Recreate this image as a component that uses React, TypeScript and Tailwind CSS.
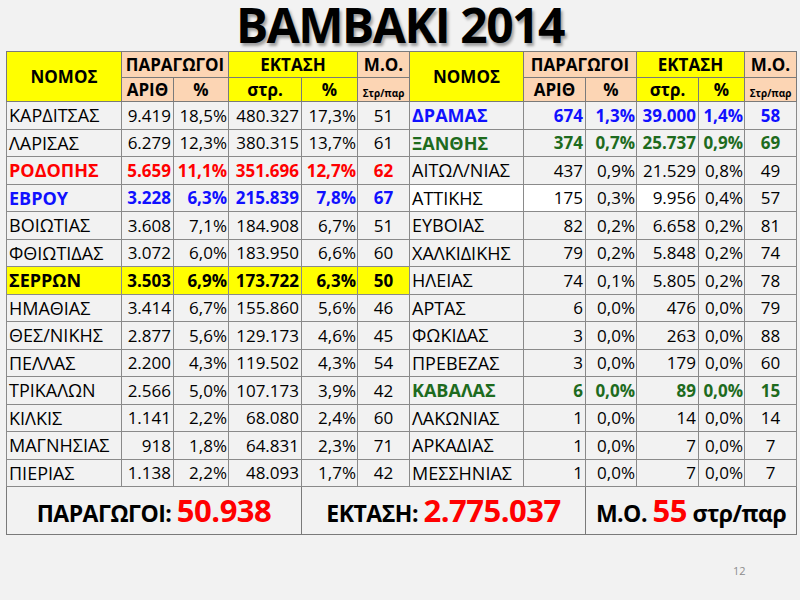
import React from "react";

type Row = {
  n: string;
  a: string;
  p: string;
  s: string;
  q: string;
  m: string;
  c?: "red" | "blue" | "green" | "hl";
  white?: boolean;
};

const left: Row[] = [
  { n: "ΚΑΡΔΙΤΣΑΣ", a: "9.419", p: "18,5%", s: "480.327", q: "17,3%", m: "51" },
  { n: "ΛΑΡΙΣΑΣ", a: "6.279", p: "12,3%", s: "380.315", q: "13,7%", m: "61" },
  { n: "ΡΟΔΟΠΗΣ", a: "5.659", p: "11,1%", s: "351.696", q: "12,7%", m: "62", c: "red" },
  { n: "ΕΒΡΟΥ", a: "3.228", p: "6,3%", s: "215.839", q: "7,8%", m: "67", c: "blue" },
  { n: "ΒΟΙΩΤΙΑΣ", a: "3.608", p: "7,1%", s: "184.908", q: "6,7%", m: "51" },
  { n: "ΦΘΙΩΤΙΔΑΣ", a: "3.072", p: "6,0%", s: "183.950", q: "6,6%", m: "60" },
  { n: "ΣΕΡΡΩΝ", a: "3.503", p: "6,9%", s: "173.722", q: "6,3%", m: "50", c: "hl" },
  { n: "ΗΜΑΘΙΑΣ", a: "3.414", p: "6,7%", s: "155.860", q: "5,6%", m: "46" },
  { n: "ΘΕΣ/ΝΙΚΗΣ", a: "2.877", p: "5,6%", s: "129.173", q: "4,6%", m: "45" },
  { n: "ΠΕΛΛΑΣ", a: "2.200", p: "4,3%", s: "119.502", q: "4,3%", m: "54" },
  { n: "ΤΡΙΚΑΛΩΝ", a: "2.566", p: "5,0%", s: "107.173", q: "3,9%", m: "42" },
  { n: "ΚΙΛΚΙΣ", a: "1.141", p: "2,2%", s: "68.080", q: "2,4%", m: "60" },
  { n: "ΜΑΓΝΗΣΙΑΣ", a: "918", p: "1,8%", s: "64.831", q: "2,3%", m: "71" },
  { n: "ΠΙΕΡΙΑΣ", a: "1.138", p: "2,2%", s: "48.093", q: "1,7%", m: "42" },
];

const right: Row[] = [
  { n: "ΔΡΑΜΑΣ", a: "674", p: "1,3%", s: "39.000", q: "1,4%", m: "58", c: "blue" },
  { n: "ΞΑΝΘΗΣ", a: "374", p: "0,7%", s: "25.737", q: "0,9%", m: "69", c: "green" },
  { n: "ΑΙΤΩΛ/ΝΙΑΣ", a: "437", p: "0,9%", s: "21.529", q: "0,8%", m: "49" },
  { n: "ΑΤΤΙΚΗΣ", a: "175", p: "0,3%", s: "9.956", q: "0,4%", m: "57", white: true },
  { n: "ΕΥΒΟΙΑΣ", a: "82", p: "0,2%", s: "6.658", q: "0,2%", m: "81" },
  { n: "ΧΑΛΚΙΔΙΚΗΣ", a: "79", p: "0,2%", s: "5.848", q: "0,2%", m: "74" },
  { n: "ΗΛΕΙΑΣ", a: "74", p: "0,1%", s: "5.805", q: "0,2%", m: "78" },
  { n: "ΑΡΤΑΣ", a: "6", p: "0,0%", s: "476", q: "0,0%", m: "79" },
  { n: "ΦΩΚΙΔΑΣ", a: "3", p: "0,0%", s: "263", q: "0,0%", m: "88" },
  { n: "ΠΡΕΒΕΖΑΣ", a: "3", p: "0,0%", s: "179", q: "0,0%", m: "60" },
  { n: "ΚΑΒΑΛΑΣ", a: "6", p: "0,0%", s: "89", q: "0,0%", m: "15", c: "green" },
  { n: "ΛΑΚΩΝΙΑΣ", a: "1", p: "0,0%", s: "14", q: "0,0%", m: "14" },
  { n: "ΑΡΚΑΔΙΑΣ", a: "1", p: "0,0%", s: "7", q: "0,0%", m: "7" },
  { n: "ΜΕΣΣΗΝΙΑΣ", a: "1", p: "0,0%", s: "7", q: "0,0%", m: "7" },
];

function colorCls(c?: Row["c"]) {
  if (c === "red") return "text-[#ff0000] font-bold";
  if (c === "blue") return "text-[#1010ff] font-bold";
  if (c === "green") return "text-[#1e6b1e] font-bold";
  if (c === "hl") return "text-black font-bold";
  return "text-black";
}

const td = "border border-[#8a8a8a] h-[27.5px] p-0 leading-none whitespace-nowrap";

function Cells({ r }: { r: Row }) {
  const col = colorCls(r.c);
  const bg = r.c === "hl" ? "bg-[#ffff00]" : "bg-[#f2f2f2]";
  const wbg = r.white ? "bg-white" : bg;
  return (
    <>
      <td className={`${td} ${wbg} ${col} text-left pl-[2px] text-[18px]`}>{r.n}</td>
      <td className={`${td} ${wbg} ${col} text-right pr-[2px] text-[17px]`}>{r.a}</td>
      <td className={`${td} ${bg} ${col} text-right pr-[1px] text-[17px]`}>{r.p}</td>
      <td className={`${td} ${wbg} ${col} text-right pr-[2px] text-[17px]`}>{r.s}</td>
      <td className={`${td} ${bg} ${col} text-right pr-[1px] text-[17px]`}>{r.q}</td>
      <td className={`${td} ${bg} ${col} text-center text-[17px]`}>{r.m}</td>
    </>
  );
}

const th = "border border-[#7a7a7a] p-0 font-bold text-black leading-none text-center whitespace-nowrap";
const Y = "bg-[#ffff00]";
const P = "bg-[#fcd5b4]";

function HeadTop() {
  return (
    <>
      <td rowSpan={2} className={`${th} ${Y} text-[17px]`}>ΝΟΜΟΣ</td>
      <td colSpan={2} className={`${th} ${P} h-[26px] text-[17px]`}>ΠΑΡΑΓΩΓΟΙ</td>
      <td colSpan={2} className={`${th} ${Y} text-[17px]`}>ΕΚΤΑΣΗ</td>
      <td className={`${th} ${P} text-[17px]`}>Μ.Ο.</td>
    </>
  );
}

function HeadBottom() {
  return (
    <>
      <td className={`${th} ${P} h-[24px] text-[17px]`}>ΑΡΙΘ</td>
      <td className={`${th} ${P} text-[17px]`}>%</td>
      <td className={`${th} ${Y} text-[17px]`}>στρ.</td>
      <td className={`${th} ${Y} text-[17px]`}>%</td>
      <td className={`${th} ${P} text-[10px] align-bottom pb-[3px]`}>Στρ/παρ</td>
    </>
  );
}

export default function App() {
  const widths = [115, 52, 55, 73, 56, 52, 114, 62, 51, 62, 46, 52];
  return (
    <div
      className="w-[800px] h-[600px] bg-[#f2f2f2] relative overflow-hidden"
      style={{ fontFamily: '"Open Sans", "Noto Sans", sans-serif' }}
    >
      <div className="h-[51px] flex items-start justify-center pt-[1px]">
        <h1 className="text-[48px] font-bold leading-[48px] tracking-[-1.5px] text-black [text-shadow:2px_3px_3px_rgba(0,0,0,0.35)]">
          ΒΑΜΒΑΚΙ 2014
        </h1>
      </div>
      <div className="pl-[6px]">
        <table className="table-fixed border-collapse w-[790px] border border-[#7a7a7a]">
          <colgroup>
            {widths.map((w, i) => (
              <col key={i} style={{ width: w }} />
            ))}
          </colgroup>
          <tbody>
            <tr>
              <HeadTop />
              <HeadTop />
            </tr>
            <tr>
              <HeadBottom />
              <HeadBottom />
            </tr>
            {left.map((r, i) => (
              <tr key={i}>
                <Cells r={r} />
                <Cells r={right[i]} />
              </tr>
            ))}
            <tr>
              <td colSpan={4} className="border border-[#7a7a7a] h-[43px] bg-[#f2f2f2] text-center whitespace-nowrap p-0">
                <span className="text-[23px] font-bold tracking-[-0.5px]">ΠΑΡΑΓΩΓΟΙ: </span>
                <span className="text-[31px] font-bold text-[#ff0000] tracking-[-0.5px]">50.938</span>
              </td>
              <td colSpan={4} className="border border-[#7a7a7a] bg-[#f2f2f2] text-center whitespace-nowrap p-0">
                <span className="text-[23px] font-bold tracking-[-0.5px]">ΕΚΤΑΣΗ: </span>
                <span className="text-[31px] font-bold text-[#ff0000] tracking-[-0.5px]">2.775.037</span>
              </td>
              <td colSpan={4} className="border border-[#7a7a7a] bg-[#f2f2f2] text-center whitespace-nowrap p-0">
                <span className="text-[23px] font-bold tracking-[-0.5px]">Μ.Ο. </span>
                <span className="text-[31px] font-bold text-[#ff0000] tracking-[-0.5px]">55</span>
                <span className="text-[23px] font-bold tracking-[-0.5px]"> στρ/παρ</span>
              </td>
            </tr>
          </tbody>
        </table>
      </div>
      <div className="absolute left-[733px] top-[563px] text-[11px] text-[#8c8c8c]">12</div>
    </div>
  );
}
